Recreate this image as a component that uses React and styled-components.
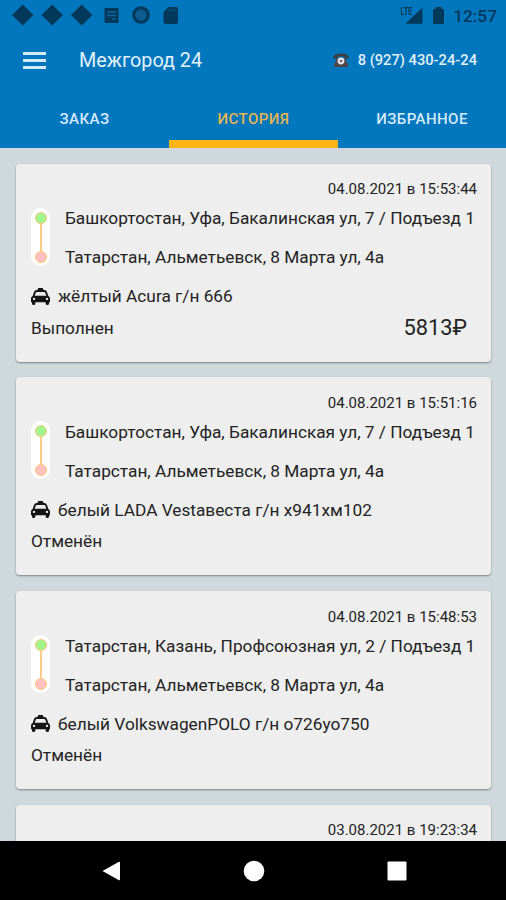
import React from 'react';
import styled, { createGlobalStyle } from 'styled-components';

const GlobalStyle = createGlobalStyle`
  * {
    box-sizing: border-box;
  }
  body {
    margin: 0;
    font-family: Roboto, "Noto Sans", sans-serif;
    background: #cfd8dc;
  }
`;

const Screen = styled.div`
  display: flex;
  flex-direction: column;
  width: 506px;
  height: 900px;
  overflow: hidden;
  background: #cfd8dc;
`;

const Header = styled.header`
  flex: none;
  height: 148px;
  background: #0277bd;
  color: #e1f0fb;
`;

const StatusBar = styled.div`
  display: flex;
  align-items: center;
  justify-content: space-between;
  height: 30px;
  padding: 0 9px 0 12px;
  color: #02385a;
`;

const StatusGroup = styled.div`
  display: flex;
  align-items: center;
`;

const Clock = styled.span`
  margin-left: 9px;
  padding-top: 1px;
  font-size: 17.3px;
  font-weight: 500;
  line-height: 30px;
`;

const Toolbar = styled.div`
  display: flex;
  align-items: center;
  height: 60px;
  padding: 0 29px 0 23px;
`;

const MenuButton = styled.button`
  display: flex;
  flex-direction: column;
  gap: 4px;
  width: 23px;
  margin: 0;
  padding: 0;
  border: 0;
  background: none;
`;

const MenuLine = styled.span`
  height: 3px;
  background: #d5eafa;
`;

const Title = styled.h1`
  flex: 1;
  margin: 1px 0 0 33px;
  font-size: 19.8px;
  font-weight: 400;
`;

const Phone = styled.div`
  display: flex;
  align-items: center;
  gap: 9px;
  font-size: 14.7px;
  font-weight: 500;
  white-space: nowrap;
`;

const Tabs = styled.nav`
  display: grid;
  grid-template-columns: 169px 169px 1fr;
  height: 58px;
`;

const Tab = styled.div`
  display: flex;
  align-items: center;
  justify-content: center;
  padding-top: 8px;
  border-bottom: 8px solid ${({ $active }) => ($active ? '#fdb515' : 'transparent')};
  color: ${({ $active }) => ($active ? '#e5b550' : '#d5eafa')};
  font-size: 15px;
  font-weight: 500;
  letter-spacing: 0.45px;
`;

const List = styled.main`
  flex: 1;
  display: flex;
  flex-direction: column;
  gap: 15.8px;
  min-height: 0;
  padding: 15.5px 15px 0 16px;
  overflow: hidden;
`;

const Card = styled.article`
  flex: none;
  height: 198px;
  padding: 14.5px 14px 0 15px;
  border-radius: 4px;
  background: #eeeeee;
  box-shadow: 0 1px 2px rgba(0, 0, 0, 0.4);
  color: #232323;
  white-space: nowrap;
`;

const DateText = styled.div`
  height: 21px;
  font-size: 15px;
  line-height: 22px;
  text-align: right;
`;

const Route = styled.div`
  display: flex;
  align-items: center;
  height: 78px;
`;

const Points = styled.div`
  flex: none;
  display: flex;
  flex-direction: column;
  align-items: center;
  width: 19px;
  height: 58px;
  margin: 0 15px 3px 0;
  padding: 4px 0 3px;
  border-radius: 10px;
  background: #fff;
`;

const Dot = styled.span`
  width: 12px;
  height: 12px;
  border: 1px solid #fdc579;
  border-radius: 50%;
  background: ${({ $color }) => $color};
`;

const Line = styled.span`
  flex: 1;
  width: 2px;
  background: #fbcd8b;
`;

const Addresses = styled.div`
  font-size: 17.25px;
  line-height: 39px;
`;

const Car = styled.div`
  display: flex;
  align-items: center;
  gap: 8px;
  height: 38px;
  font-size: 17.25px;
`;

const Footer = styled.div`
  display: flex;
  align-items: center;
  justify-content: space-between;
  height: 25px;
  padding-right: 10px;
  font-size: 17.25px;
`;

const Price = styled.span`
  font-size: 21.8px;
`;

const NavBar = styled.footer`
  flex: none;
  display: grid;
  grid-template-columns: 181px 145px 141px;
  align-items: center;
  height: 59px;
  background: #000;
`;

const NavButton = styled.div`
  display: flex;
  justify-content: ${({ $end }) => ($end ? 'flex-end' : 'center')};
`;

const trips = [
  {
    date: '04.08.2021 в 15:53:44',
    from: 'Башкортостан, Уфа, Бакалинская ул, 7 / Подъезд 1',
    to: 'Татарстан, Альметьевск, 8 Марта ул, 4а',
    car: 'жёлтый Acura г/н 666',
    status: 'Выполнен',
    price: '5813₽',
  },
  {
    date: '04.08.2021 в 15:51:16',
    from: 'Башкортостан, Уфа, Бакалинская ул, 7 / Подъезд 1',
    to: 'Татарстан, Альметьевск, 8 Марта ул, 4а',
    car: 'белый LADA Vestaвеста г/н х941хм102',
    status: 'Отменён',
  },
  {
    date: '04.08.2021 в 15:48:53',
    from: 'Татарстан, Казань, Профсоюзная ул, 2 / Подъезд 1',
    to: 'Татарстан, Альметьевск, 8 Марта ул, 4а',
    car: 'белый VolkswagenPOLO г/н о726уо750',
    status: 'Отменён',
  },
  { date: '03.08.2021 в 19:23:34' },
];

function Notifications() {
  return (
    <svg width="168" height="30" viewBox="12 0 168 30" fill="#02385a">
      <path d="M12 15 22.7 4.5 33.4 15 22.7 25.5zM41.5 15 52.2 4.5 62.9 15 52.2 25.5zM71 15 81.7 4.5 92.4 15 81.7 25.5z" />
      <path d="M104.5 8h14v15h-14z" />
      <path d="M107 12h9M107 15.5h9M112 19h4" stroke="#0b66a0" strokeWidth="1.3" />
      <circle cx="141" cy="15" r="7.3" fill="#0d5c90" stroke="#02385a" strokeWidth="3" />
      <path d="M168.5 7h7.5q2 0 2 2v13q0 2-2 2h-10.5q-2 0-2-2v-10z" />
      <path d="M169.5 9v2.500M172.2 9v2.500M175 9v2.500" stroke="#0b5a8e" strokeWidth="1" />
    </svg>
  );
}

function Signal() {
  return (
    <svg width="44" height="30" viewBox="400 0 44 30" fill="#02385a">
      <text x="400.5" y="14.5" fontSize="10.5" fontWeight="700" textLength="12" lengthAdjust="spacingAndGlyphs">LTE</text>
      <path d="M422.5 7.5v16.2h-17z" />
      <path d="M435.500 7h6v2h1.500q1 0 1 1v13q0 1-1 1h-9q-1 0-1-1v-13q0-1 1-1h1.500z" />
    </svg>
  );
}

function PhoneIcon() {
  return (
    <svg width="16" height="15" viewBox="0 0 16 15">
      <path d="M4 5h8l3 6.5v2.5h-14v-2.5z" fill="#514748" />
      <path d="M0 5.5q0-5 8-5t8 5h-4.5v-2h-7v2z" fill="#403b3e" />
      <circle cx="8" cy="8" r="3.4" fill="#e3e5ea" />
      <circle cx="8" cy="8" r="1.3" fill="#786066" />
    </svg>
  );
}

function TaxiIcon() {
  return (
    <svg width="19" height="17" viewBox="0 0 57 51" fill="#151515">
      <path d="M19 7l3-7h13l3 7z" />
      <path
        fillRule="evenodd"
        d="M17 6h23q6 0 8 6l4 12q5 2 5 7v12h-3v4q0 4-5 4t-5-4v-4h-31v4q0 4-5 4t-5-4v-4h-3v-12q0-5 5-7l4-12q2-6 8-6zM17 12q-2 0-3 3l-3 8h35l-3-8q-1-3-3-3zM9 29a3.5 3.5 0 1 0 .1 0zM48 29a3.5 3.5 0 1 0 .1 0z"
      />
    </svg>
  );
}

function TripCard({ trip }) {
  return (
    <Card>
      <DateText>{trip.date}</DateText>
      {trip.from && (
        <>
          <Route>
            <Points>
              <Dot $color="#a0f58c" />
              <Line />
              <Dot $color="#ffc0c0" />
            </Points>
            <Addresses>
              <div>{trip.from}</div>
              <div>{trip.to}</div>
            </Addresses>
          </Route>
          <Car>
            <TaxiIcon />
            {trip.car}
          </Car>
          <Footer>
            <span>{trip.status}</span>
            {trip.price && <Price>{trip.price}</Price>}
          </Footer>
        </>
      )}
    </Card>
  );
}

function App() {
  return (
    <Screen>
      <GlobalStyle />
      <Header>
        <StatusBar>
          <Notifications />
          <StatusGroup>
            <Signal />
            <Clock>12:57</Clock>
          </StatusGroup>
        </StatusBar>
        <Toolbar>
          <MenuButton aria-label="Меню">
            <MenuLine />
            <MenuLine />
            <MenuLine />
          </MenuButton>
          <Title>Межгород 24</Title>
          <Phone>
            <PhoneIcon />
            8 (927) 430-24-24
          </Phone>
        </Toolbar>
        <Tabs>
          <Tab>ЗАКАЗ</Tab>
          <Tab $active>ИСТОРИЯ</Tab>
          <Tab>ИЗБРАННОЕ</Tab>
        </Tabs>
      </Header>
      <List>
        {trips.map((trip) => (
          <TripCard key={trip.date} trip={trip} />
        ))}
      </List>
      <NavBar>
        <NavButton $end>
          <svg width="80" height="22" viewBox="0 0 80 22">
            <path d="M1.5 11 17.5 2q1.5-.8 1.5 1v16q0 1.8-1.5 1z" fill="#fff" />
          </svg>
        </NavButton>
        <NavButton>
          <svg width="22" height="22" viewBox="0 0 22 22">
            <circle cx="11" cy="11" r="10.3" fill="#fff" />
          </svg>
        </NavButton>
        <NavButton>
          <svg width="22" height="22" viewBox="0 0 22 22">
            <rect x="1.5" y="1.5" width="19" height="19" rx="1" fill="#fff" />
          </svg>
        </NavButton>
      </NavBar>
    </Screen>
  );
}

export default App;
